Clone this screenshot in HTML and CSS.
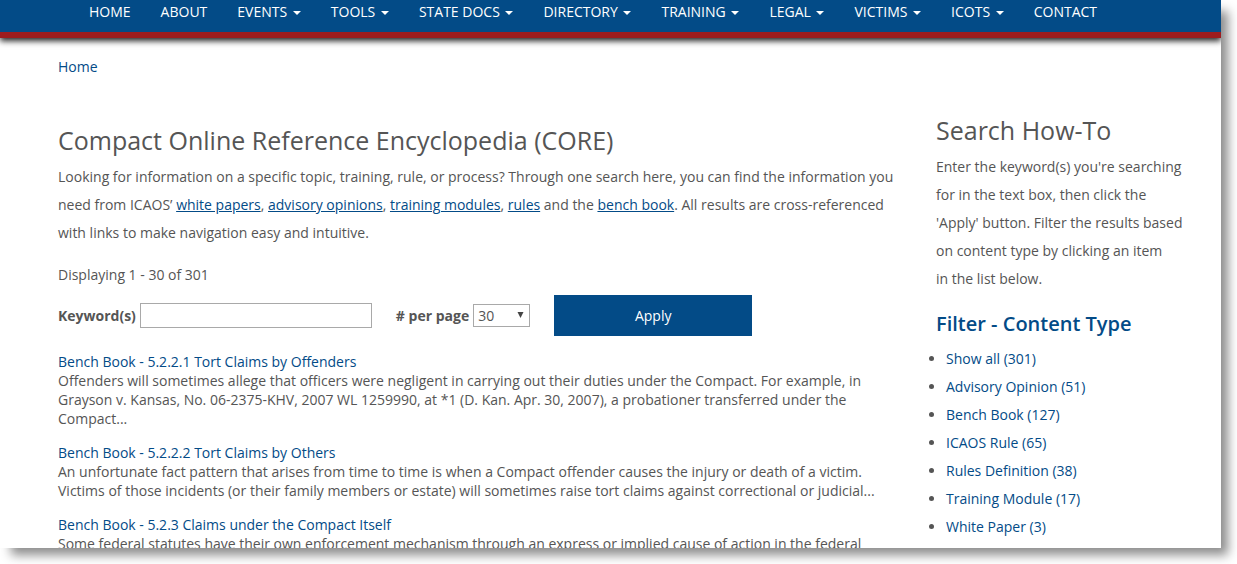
FILE: index.html
```html
<!DOCTYPE html>
<html lang="en">
    <head>
        <meta charset="utf-8">
        <title>Compact Online Reference Encyclopedia (CORE)</title>
        <link rel="stylesheet" href="styles.css">
    </head>
    <body>
        <div class="page">
            <header class="header">
                <nav class="menu">
                    <a href="#">HOME</a>
                    <a href="#">ABOUT</a>
                    <a href="#">EVENTS <span class="caret"></span></a>
                    <a href="#">TOOLS <span class="caret"></span></a>
                    <a href="#">STATE DOCS <span class="caret"></span></a>
                    <a href="#">DIRECTORY <span class="caret"></span></a>
                    <a href="#">TRAINING <span class="caret"></span></a>
                    <a href="#">LEGAL <span class="caret"></span></a>
                    <a href="#">VICTIMS <span class="caret"></span></a>
                    <a href="#">ICOTS <span class="caret"></span></a>
                    <a href="#">CONTACT</a>
                </nav>
            </header>
            <div class="breadcrumb"><a href="#">Home</a></div>
            <div class="columns">
                <main class="main">
                    <h1>Compact Online Reference Encyclopedia (CORE)</h1>
                    <p class="intro">Looking for information on a specific topic, training, rule, or process? Through one search here, you can find the information you need from ICAOS’ <a href="#">white papers</a>, <a href="#">advisory opinions</a>, <a href="#">training modules</a>, <a href="#">rules</a> and the <a href="#">bench book</a>. All results are cross-referenced with links to make navigation easy and intuitive.</p>
                    <p class="count">Displaying 1 - 30 of 301</p>
                    <form class="search">
                        <div class="field">
                            <label for="keywords">Keyword(s)</label>
                            <input type="text" id="keywords">
                        </div>
                        <div class="field">
                            <label for="per_page"># per page</label>
                            <div class="select_box">
                                <select id="per_page">
                                    <option>10</option>
                                    <option selected>30</option>
                                    <option>50</option>
                                </select>
                                <svg class="arrow" width="7" height="6" viewBox="0 0 7 6"><path d="M0.5 0h6L3.5 6z" fill="#444"/></svg>
                            </div>
                        </div>
                        <button type="button">Apply</button>
                    </form>
                    <div class="result">
                        <a href="#">Bench Book - 5.2.2.1 Tort Claims by Offenders</a>
                        <p>Offenders will sometimes allege that officers were negligent in carrying out their duties under the Compact. For example, in Grayson v. Kansas, No. 06-2375-KHV, 2007 WL 1259990, at *1 (D. Kan. Apr. 30, 2007), a probationer transferred under the Compact...</p>
                    </div>
                    <div class="result">
                        <a href="#">Bench Book - 5.2.2.2 Tort Claims by Others</a>
                        <p>An unfortunate fact pattern that arises from time to time is when a Compact offender causes the injury or death of a victim. Victims of those incidents (or their family members or estate) will sometimes raise tort claims against correctional or judicial...</p>
                    </div>
                    <div class="result">
                        <a href="#">Bench Book - 5.2.3 Claims under the Compact Itself</a>
                        <p>Some federal statutes have their own enforcement mechanism through an express or implied cause of action in the federal</p>
                    </div>
                </main>
                <aside class="sidebar">
                    <h2>Search How-To</h2>
                    <p>Enter the keyword(s) you're searching for in the text box, then click the 'Apply' button. Filter the results based on content type by clicking an item in&nbsp;the list below.</p>
                    <h3>Filter - Content Type</h3>
                    <ul>
                        <li><a href="#">Show all (301)</a></li>
                        <li><a href="#">Advisory Opinion (51)</a></li>
                        <li><a href="#">Bench Book (127)</a></li>
                        <li><a href="#">ICAOS Rule (65)</a></li>
                        <li><a href="#">Rules Definition (38)</a></li>
                        <li><a href="#">Training Module (17)</a></li>
                        <li><a href="#">White Paper (3)</a></li>
                    </ul>
                </aside>
            </div>
        </div>
    </body>
</html>
```

FILE: styles.css
```css
* {
    box-sizing: border-box;
}
body {
    margin: 0;
    height: 100vh;
    padding: 0 16px 16px 0;
    overflow: hidden;
    background: #fff;
    color: #555;
    font-family: "Open Sans", sans-serif;
    font-size: 14px;
    line-height: 28px;
}
h1, h2, h3, p, ul {
    margin: 0;
    padding: 0;
}
a {
    color: #034b87;
    text-decoration: none;
}
.page {
    height: 100%;
    overflow: hidden;
    background: #fff;
    box-shadow: 9px 9px 10px -2px rgba(0, 0, 0, 0.45);
}

/* top menu */
.header {
    padding: 2px 74px 10px;
    background: #034b87;
    border-bottom: 6px solid #9e1c1e;
    box-shadow: 0 3px 6px rgba(0, 0, 0, 0.85);
}
.menu {
    display: flex;
}
.menu a {
    padding: 0 15px;
    color: #fff;
    line-height: 20px;
    white-space: nowrap;
}
.caret {
    display: inline-block;
    margin-left: 2px;
    vertical-align: middle;
    border-top: 4px solid;
    border-left: 4px solid transparent;
    border-right: 4px solid transparent;
}
.breadcrumb {
    padding: 15px 58px 0;
}
.columns {
    display: grid;
    grid-template-columns: minmax(0, 1fr) 250px;
    gap: 37px;
    padding: 33px 35px 0 58px;
}

/* search */
.main {
    padding-top: 10px;
}
h1, h2 {
    font-size: 25px;
    font-weight: 400;
    line-height: 32px;
    margin-bottom: 7px;
}
.intro a {
    text-decoration: underline;
}
.count {
    margin-top: 14px;
}
.search {
    display: flex;
    align-items: center;
    gap: 24px;
    margin: 6px 0 16px;
}
.field {
    display: flex;
    align-items: center;
    gap: 4px;
}
.field label {
    font-weight: 700;
}
.field input {
    width: 232px;
    height: 25px;
    padding: 0 4px;
    border: 1px solid #a9a9a9;
    font: inherit;
}
.select_box {
    position: relative;
    display: flex;
}
.select_box select {
    appearance: none;
    width: 57px;
    height: 23px;
    padding: 0 4px;
    border: 1px solid #a9a9a9;
    border-radius: 0;
    background: #fff;
    color: #555;
    font: inherit;
    line-height: 20px;
}
.arrow {
    position: absolute;
    top: 8px;
    right: 6px;
    pointer-events: none;
}
.search button {
    width: 198px;
    height: 41px;
    border: 0;
    background: #034b87;
    color: #fff;
    font: inherit;
}
.result {
    margin-bottom: 15px;
    line-height: 19px;
}

/* filter */
.sidebar h3 {
    margin: 17px 0 7px;
    color: #034b87;
    font-size: 20px;
    font-weight: 600;
    line-height: 28px;
}
.sidebar ul {
    padding-left: 10px;
}
```
